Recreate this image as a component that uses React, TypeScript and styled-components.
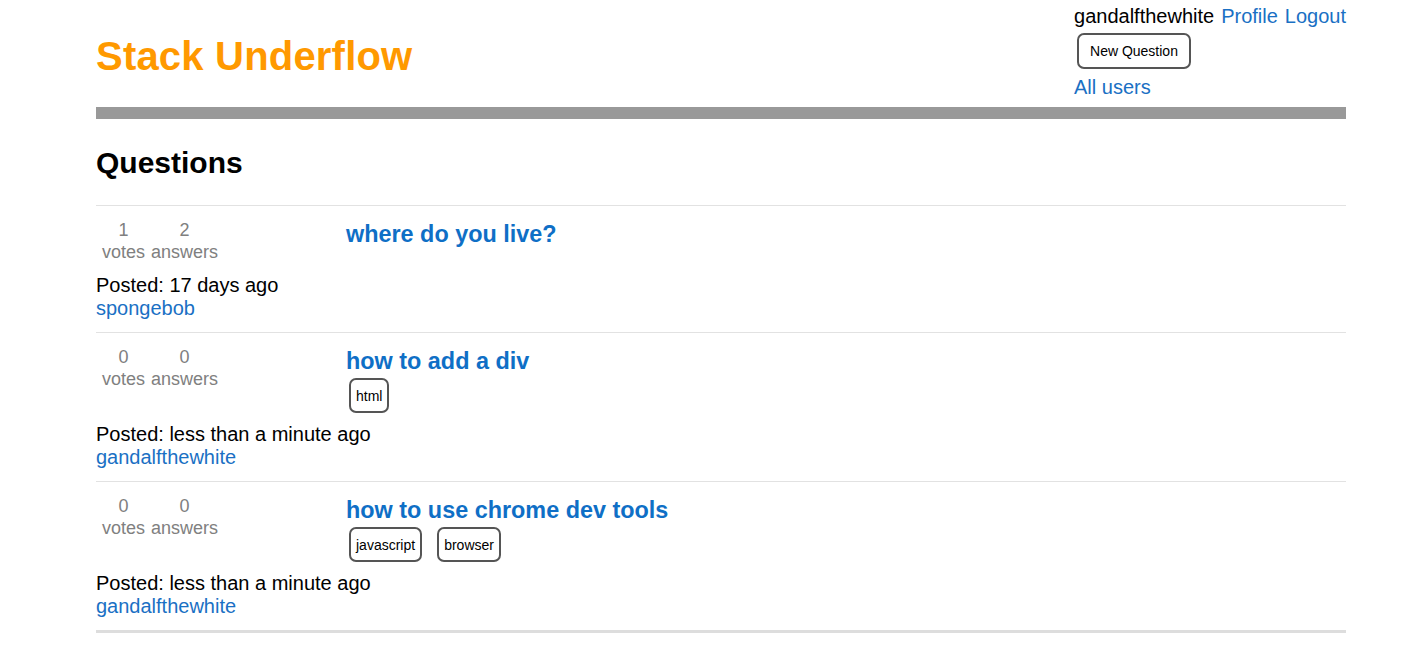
import React from "react";
import styled, { createGlobalStyle } from "styled-components";

const GlobalStyle = createGlobalStyle`
  body {
    margin: 0;
    background: #fff;
    font-family: "Liberation Sans", Arial, Helvetica, sans-serif;
    font-size: 20px;
    color: #000;
  }
  a {
    color: #1a70c4;
    text-decoration: none;
  }
`;

const Page = styled.div`
  width: 1250px;
  margin-left: 96px;
`;

const Header = styled.header`
  display: flex;
  justify-content: space-between;
  align-items: flex-start;
  padding-top: 5px;
`;

const Logo = styled.h1`
  margin: 29px 0 0;
  font-size: 40px;
  font-weight: bold;
  letter-spacing: 0.2px;
  color: #ff9900;
`;

const UserBox = styled.div`
  display: flex;
  flex-direction: column;
  align-items: flex-start;
`;

const UserLine = styled.div`
  display: flex;
  gap: 7px;
`;

const NewButton = styled.button`
  margin: 5px 0 0 3px;
  height: 36px;
  padding: 0 11px;
  font-family: inherit;
  font-size: 14px;
  color: #000;
  background: #fff;
  border: 2px solid #555;
  border-radius: 7px;
`;

const AllUsers = styled.a`
  margin-top: 7px;
`;

const Bar = styled.div`
  height: 12px;
  margin-top: 8px;
  background: #999;
`;

const Heading = styled.h2`
  margin: 27px 0 25px;
  font-size: 30px;
  font-weight: bold;
`;

const List = styled.ul`
  list-style: none;
  margin: 0;
  padding: 0;
  border-bottom: 3px solid #ddd;
`;

const Item = styled.li`
  border-top: 1px solid #e2e2e2;
  padding: 13px 0 12px;
`;

const Row = styled.div`
  display: flex;
  align-items: flex-start;
`;

const Stats = styled.div`
  width: 250px;
  flex-shrink: 0;
  display: flex;
  gap: 6px;
  padding-left: 6px;
  box-sizing: border-box;
  margin-bottom: 11px;
  font-size: 18px;
  line-height: 22px;
  color: #808080;
`;

const Stat = styled.div`
  display: flex;
  flex-direction: column;
  align-items: center;
`;

const Content = styled.div`
  padding-top: 2px;
`;

const Title = styled.h3`
  margin: 0;
  font-size: 23.4px;
  font-weight: bold;
  a {
    color: #0f6fc6;
  }
`;

const Tags = styled.div`
  display: flex;
  gap: 15px;
  margin: 3px 0 10px 3px;
`;

const Tag = styled.span`
  height: 35px;
  box-sizing: border-box;
  display: flex;
  align-items: center;
  padding: 0 5px;
  font-size: 14px;
  border: 2px solid #555;
  border-radius: 7px;
`;

type Question = {
  votes: number;
  answers: number;
  title: string;
  tags: string[];
  posted: string;
  author: string;
};

const questions: Question[] = [
  { votes: 1, answers: 2, title: "where do you live?", tags: [], posted: "17 days ago", author: "spongebob" },
  { votes: 0, answers: 0, title: "how to add a div", tags: ["html"], posted: "less than a minute ago", author: "gandalfthewhite" },
  {
    votes: 0,
    answers: 0,
    title: "how to use chrome dev tools",
    tags: ["javascript", "browser"],
    posted: "less than a minute ago",
    author: "gandalfthewhite",
  },
];

export default function App() {
  return (
    <>
      <GlobalStyle />
      <Page>
        <Header>
          <Logo>Stack Underflow</Logo>
          <UserBox>
            <UserLine>
              <span>gandalfthewhite</span>
              <a href="#">Profile</a>
              <a href="#">Logout</a>
            </UserLine>
            <NewButton>New Question</NewButton>
            <AllUsers href="#">All users</AllUsers>
          </UserBox>
        </Header>
        <Bar />
        <Heading>Questions</Heading>
        <List>
          {questions.map((q) => (
            <Item key={q.title}>
              <Row>
                <Stats>
                  <Stat>
                    <span>{q.votes}</span>
                    <span>votes</span>
                  </Stat>
                  <Stat>
                    <span>{q.answers}</span>
                    <span>answers</span>
                  </Stat>
                </Stats>
                <Content>
                  <Title>
                    <a href="#">{q.title}</a>
                  </Title>
                  {q.tags.length > 0 && (
                    <Tags>
                      {q.tags.map((t) => (
                        <Tag key={t}>{t}</Tag>
                      ))}
                    </Tags>
                  )}
                </Content>
              </Row>
              <div>Posted: {q.posted}</div>
              <a href="#">{q.author}</a>
            </Item>
          ))}
        </List>
      </Page>
    </>
  );
}
